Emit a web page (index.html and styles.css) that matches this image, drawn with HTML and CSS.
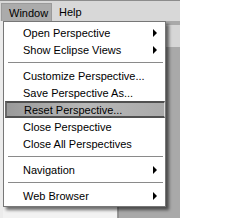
FILE: index.html
```html
<!DOCTYPE html>
<html>
<head>
<meta charset="utf-8">
<link rel="stylesheet" href="styles.css">
</head>
<body>
<div class="screen">
  <div class="menubar">
    <span class="mb-item active">Window</span>
    <span class="mb-item">Help</span>
  </div>
  <div class="workbench">
    <div class="left-edge"></div>
    <div class="editor">
      <div class="editor-lines"></div>
    </div>
    <div class="side-panel">
      <div class="side-toolbar"><span class="side-btn"></span></div>
    </div>
  </div>
  <div class="menu">
    <div class="item"><span class="label">Open Perspective</span><span class="arrow"></span></div>
    <div class="item"><span class="label">Show Eclipse Views</span><span class="arrow"></span></div>
    <div class="sep"></div>
    <div class="item"><span class="label">Customize Perspective...</span></div>
    <div class="item"><span class="label">Save Perspective As...</span></div>
    <div class="item hl"><span class="label">Reset Perspective...</span></div>
    <div class="item"><span class="label">Close Perspective</span></div>
    <div class="item"><span class="label">Close All Perspectives</span></div>
    <div class="sep"></div>
    <div class="item"><span class="label">Navigation</span><span class="arrow"></span></div>
    <div class="sep"></div>
    <div class="item"><span class="label">Web Browser</span><span class="arrow"></span></div>
  </div>
</div>
</body>
</html>
```

FILE: styles.css
```css
html, body {
  margin: 0;
  padding: 0;
  background: #ffffff;
}
.screen {
  position: relative;
  width: 180px;
  height: 218px;
  font-family: "Liberation Sans", Arial, sans-serif;
  font-size: 11px;
  color: #000;
  display: flex;
  flex-direction: column;
}
.menubar {
  height: 20px;
  border-top: 1px solid #8c8c8c;
  background: #d8d8d8;
  display: flex;
  align-items: stretch;
  padding-left: 1px;
}
.mb-item {
  display: flex;
  align-items: center;
  padding: 0 6px 0 7px;
  margin-top: 2px;
}
.mb-item.active {
  background: #ababab;
  border: 1px solid #9a9a9a;
  border-bottom: none;
  width: 36px;
}
.workbench {
  flex: 1;
  display: flex;
}
.left-edge {
  width: 3px;
  background: #ececec;
}
.editor {
  width: 115px;
  background: #f2f2f2;
}
.editor-lines {
  margin-left: 114px;
  width: 2px;
  height: 100%;
  border-left: 1px solid #999;
}
.side-panel {
  flex: 1;
  background: #a9a9a9;
  border-left: 1px solid #8f8f8f;
  display: flex;
  flex-direction: column;
}
.side-toolbar {
  height: 22px;
  background: #d6d6d6;
  margin-top: 4px;
  display: flex;
  align-items: center;
  padding-left: 30px;
}
.side-btn {
  width: 8px;
  height: 4px;
  border: 1px solid #999;
  background: #eee;
}
.menu {
  position: absolute;
  left: 3px;
  top: 21px;
  width: 161px;
  background: #ffffff;
  border: 1px solid #777;
  padding: 2px 0;
  box-shadow: 3px 3px 3px rgba(0, 0, 0, 0.55);
}
.item {
  height: 17px;
  display: flex;
  align-items: center;
}
.label {
  padding-left: 19px;
  flex: 1;
  white-space: nowrap;
}
.arrow {
  width: 0;
  height: 0;
  border-top: 4px solid transparent;
  border-bottom: 4px solid transparent;
  border-left: 4px solid #000;
  margin-right: 8px;
}
.item.hl {
  background: linear-gradient(to right, #9a9a9a, #b8b8b8 50%, #aaaaaa);
  border-top: 2px solid #505050;
  border-bottom: 2px solid #505050;
  border-left: 2px solid #6a6a6a;
  border-right: 1px solid #dddddd;
  margin: 0 0 0 1px;
  height: 13px;
}
.item.hl .label {
  padding-left: 17px;
}
.sep {
  height: 9px;
  display: flex;
  align-items: center;
}
.sep::after {
  content: "";
  flex: 1;
  margin: 0 2px 0 4px;
  border-top: 1px solid #8a8a8a;
}
```
